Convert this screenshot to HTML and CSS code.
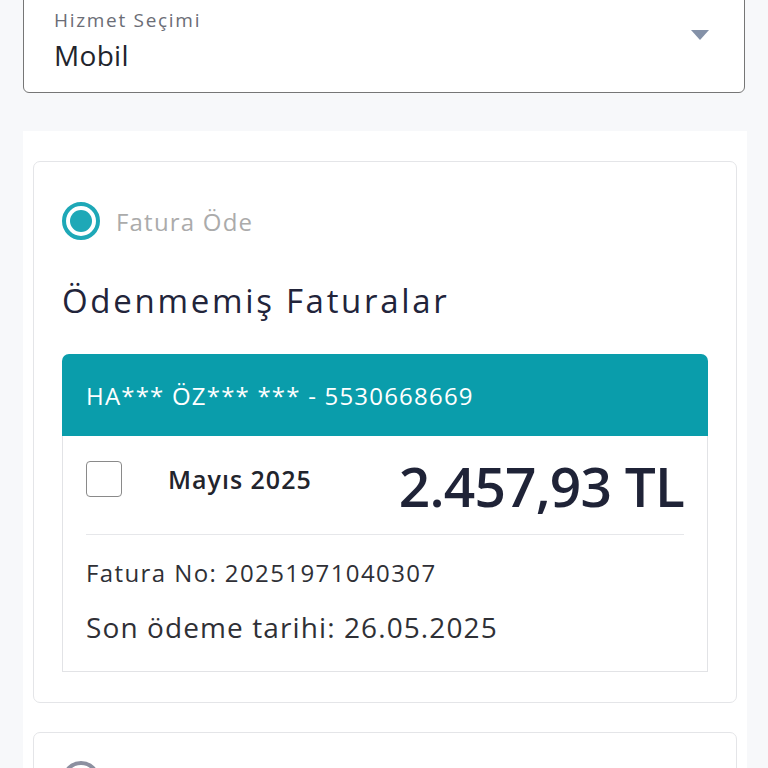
FILE: index.html
```
<!DOCTYPE html>
<html lang="tr">
<head>
<meta charset="UTF-8" />
<meta name="viewport" content="width=device-width, initial-scale=1" />
<title>Fatura Öde</title>
<link rel="stylesheet" href="styles.css">
</head>
<body>
<div class="page">
  <!-- Service select -->
  <div class="select">
    <div class="select-text">
      <div class="select-label">Hizmet Seçimi</div>
      <div class="select-value">Mobil</div>
    </div>
    <svg class="select-arrow" width="20" height="12" viewBox="0 0 20 12"><path d="M1 1 L19 1 L10 11 Z" fill="#8491a8"/></svg>
  </div>

  <div class="panel">
    <div class="card">
      <label class="radio-row">
        <span class="radio checked"></span>
        <span class="radio-text">Fatura Öde</span>
      </label>

      <h2 class="title">Ödenmemiş Faturalar</h2>

      <div class="bill">
        <div class="bill-head">HA*** ÖZ*** *** - 5530668669</div>
        <div class="bill-body">
          <div class="bill-main">
            <span class="checkbox"></span>
            <span class="bill-month">Mayıs 2025</span>
            <span class="bill-amount">2.457,93 TL</span>
          </div>
          <div class="bill-no">Fatura No: 20251971040307</div>
          <div class="bill-date">Son ödeme tarihi: 26.05.2025</div>
        </div>
      </div>
    </div>

    <div class="card card-next">
      <label class="radio-row">
        <span class="radio"></span>
        <span class="radio-text">Başka Fatura Öde</span>
      </label>
    </div>
  </div>
</div>
</body>
</html>
```
FILE: styles.css
```
body {
  margin: 0;
  background: #f7f8fa;
  font-family: "Open Sans", Lato, sans-serif;
  color: #23253a;
  overflow: hidden;
}

.page {
  padding: 0 23px;
}

/* Select box (top is scrolled off) */
.select {
  margin-top: -12px;
  height: 105px;
  box-sizing: border-box;
  background: #fff;
  border: 1.5px solid #767676;
  border-radius: 6px;
  display: flex;
  align-items: center;
  justify-content: space-between;
  padding: 0 34px 0 30px;
}
.select-label {
  font-size: 19px;
  color: #6b6d76;
  line-height: 26px;
  letter-spacing: 1.7px;
}
.select-value {
  font-size: 28px;
  color: #22242c;
  line-height: 38px;
  margin-top: 3px;
  letter-spacing: 0.3px;
}
.select-arrow {
  margin-top: -12px;
}

/* White panel with cards */
.panel {
  margin-top: 38px;
  background: #fff;
  padding: 30px 10px 0 10px;
  margin-right: -2px;
  height: 700px;
}

.card {
  border: 1px solid #e4e5e8;
  border-radius: 7px;
  padding: 40px 28px 30px 28px;
  margin-bottom: 29px;
}
.card-next {
  padding-top: 28px;
}

.radio-row {
  display: flex;
  align-items: center;
  gap: 16px;
}
.radio {
  width: 30px;
  height: 30px;
  border: 4px solid #8c90a0;
  border-radius: 50%;
  display: flex;
  align-items: center;
  justify-content: center;
  flex: none;
}
.radio.checked {
  border-color: #1ea8b7;
}
.radio.checked::after {
  content: '';
  width: 22px;
  height: 22px;
  border-radius: 50%;
  background: #1ea8b7;
}
.radio-text {
  font-size: 24px;
  color: #ababab;
  letter-spacing: 1.2px;
}

.title {
  font-size: 33px;
  font-weight: 400;
  margin: 38px 0 30px 0;
  line-height: 46px;
  color: #22243a;
  letter-spacing: 2.7px;
}

/* Bill card */
.bill-head {
  background: #0a9dab;
  color: #fff;
  font-size: 24px;
  height: 82px;
  display: flex;
  align-items: center;
  padding: 0 24px;
  border-radius: 7px 7px 0 0;
  letter-spacing: 1.2px;
}
.bill-body {
  border: 1px solid #e2e3e6;
  border-top: 0;
  padding: 0 23px 26px 23px;
}
.bill-main {
  display: flex;
  align-items: center;
  height: 86px;
  padding-bottom: 12px;
  border-bottom: 1px solid #e6e7ea;
}
.checkbox {
  width: 34px;
  height: 34px;
  border: 1.5px solid #8a8a8a;
  border-radius: 4px;
  flex: none;
}
.bill-month {
  font-size: 25px;
  font-weight: 600;
  color: #22242c;
  margin-left: 46px;
  letter-spacing: 1px;
}
.bill-amount {
  margin-left: auto;
  font-size: 55px;
  font-weight: 600;
  color: #1f2337;
  margin-top: 12px;
  letter-spacing: -0.8px;
}
.bill-no {
  font-size: 24px;
  color: #2f3036;
  margin-top: 22px;
  line-height: 32px;
  letter-spacing: 1.4px;
}
.bill-date {
  font-size: 28px;
  color: #2f3036;
  margin-top: 20px;
  line-height: 36px;
  letter-spacing: 1.1px;
}
```
